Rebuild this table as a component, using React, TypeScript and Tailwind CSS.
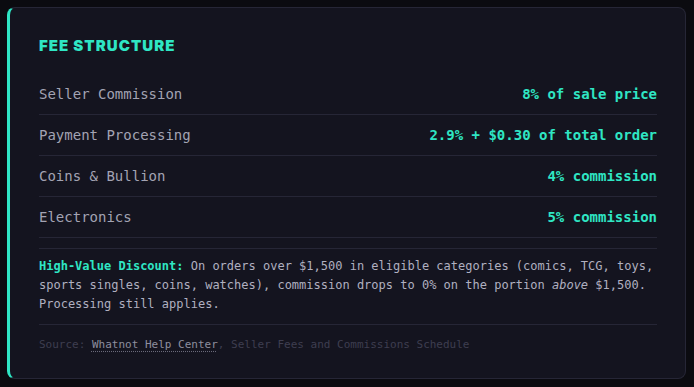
import React from 'react';

type FeeRow = { label: string; value: string };

const rows: FeeRow[] = [
    { label: 'Seller Commission', value: '8% of sale price' },
    { label: 'Payment Processing', value: '2.9% + $0.30 of total order' },
    { label: 'Coins & Bullion', value: '4% commission' },
    { label: 'Electronics', value: '5% commission' },
];

const mono = "font-['DejaVu_Sans_Mono',monospace]";

const App: React.FC = () => {
    return (
        <div className="min-h-screen bg-[#0b0b10] pl-[7px] pr-2 pt-[7px] pb-2">
            <div className="rounded-lg border border-[#262636] border-l-[3px] border-l-[#2fe6c4] bg-[#14141f] pl-[29px] pr-7 pt-7 pb-[25px]">
                <h2 className="mb-[18px] font-['Inter',sans-serif] text-[15px] leading-5 font-black tracking-[0.07em] text-[#2fe6c4]">
                    FEE STRUCTURE
                </h2>

                <div className={mono}>
                    {rows.map((row) => (
                        <div
                            key={row.label}
                            className="flex items-center justify-between border-b border-[#262636] py-[10px] text-[14px] leading-5"
                        >
                            <span className="text-[#a3a3b3]">{row.label}</span>
                            <span className="font-bold text-[#2fe6c4]">{row.value}</span>
                        </div>
                    ))}
                </div>

                <div className={`${mono} mt-[10px] border-t border-[#262636] pt-2 pb-[10px] text-[12px] leading-[19px] text-[#b0b0c0]`}>
                    <span className="font-bold text-[#2fe6c4]">High-Value Discount:</span> On orders over $1,500 in eligible
                    categories (comics, TCG, toys, sports singles, coins, watches), commission drops to 0% on the portion{' '}
                    <em>above</em> $1,500. Processing still applies.
                </div>

                <div className={`${mono} border-t border-[#262636] pt-3 text-[11px] leading-4 text-[#3e3e50]`}>
                    Source:{' '}
                    <span className="text-[#8e8e9e] underline decoration-dotted decoration-[#6a6a7a] underline-offset-[3px]">
                        Whatnot Help Center
                    </span>
                    , Seller Fees and Commissions Schedule
                </div>
            </div>
        </div>
    );
};

export default App;
